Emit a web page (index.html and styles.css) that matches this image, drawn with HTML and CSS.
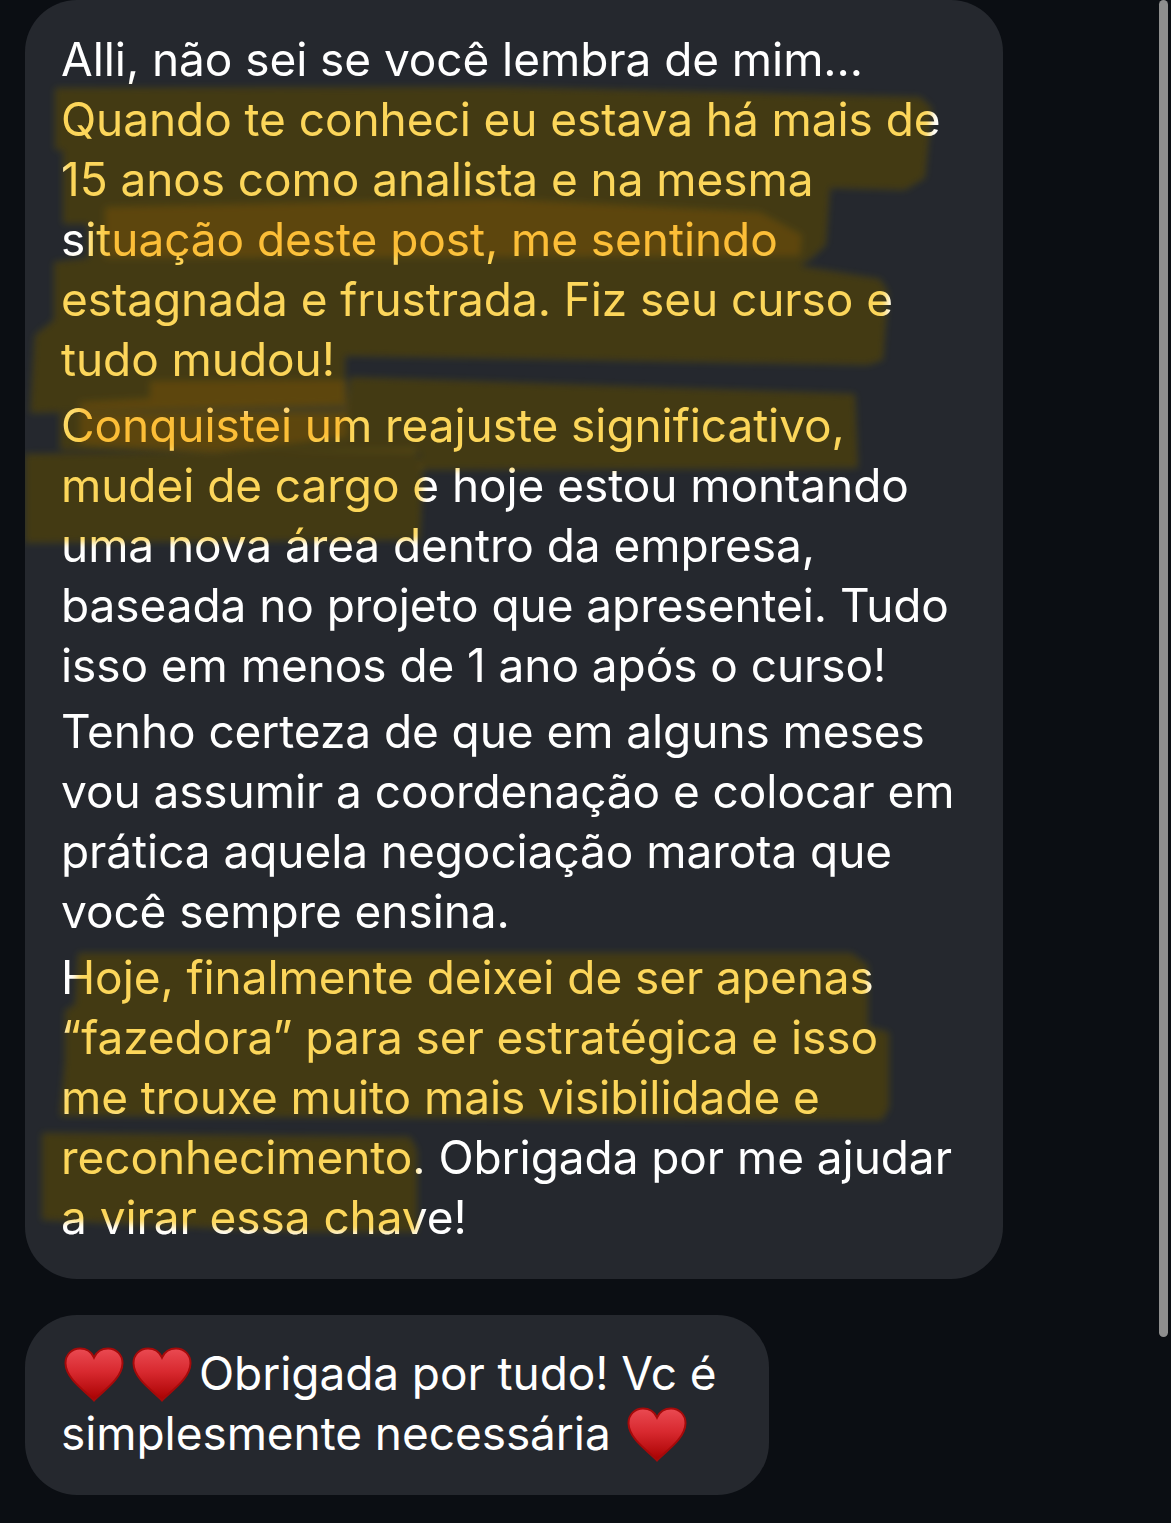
FILE: index.html
```html
<!DOCTYPE html>
<html lang="pt-BR">

<head>
    <meta charset="UTF-8" />
    <meta name="viewport" content="width=device-width, initial-scale=1" />
    <title>Mensagens</title>
    <link rel="stylesheet" href="styles.css">
</head>

<body>

    <svg class="defs" width="0" height="0" aria-hidden="true">
        <defs>
            <linearGradient id="heartFill" x1="0" y1="0" x2="0" y2="1">
                <stop offset="0" stop-color="#ea4a52" />
                <stop offset="0.45" stop-color="#d8292f" />
                <stop offset="1" stop-color="#a80000" />
            </linearGradient>
            <symbol id="heart" viewBox="0 0 60 55">
                <path d="M30 53.5C24 46 2 33 1.5 16.5 1.300 7.500 8 1.500 16 1.500c6.500 0 11.500 3.500 14 9 2.500-5.500 7.500-9 14-9 8 0 14.700 6 14.500 15C58 33 36 46 30 53.500Z"
                    fill="url(#heartFill)" stroke="#a50a0a" stroke-width="2" />
            </symbol>
            <!-- marcador: cada faixa -->
            <g id="strokesBase">
                <path d="M55 88 500 87 920 97 932 108 925 178 905 190 830 188 826 245 812 258 800 266 880 279 888 292 883 360 868 365 345 356 345 405 30 413 35 335 54 320 54 262 88 258 88 224 63 224 63 150 55 150Z" />
                <path d="M345 413 350 377 855 394 858 468 420 470 420 452 60 450 60 413Z" />
                <path d="M25 454 416 449 423 470 420 540 25 543Z" />
                <path d="M78 953 851 953 868 965 868 1027 889 1032 889 1108 882 1120 60 1116 65 1060 65 1010 75 1005Z" />
                <path d="M42 1133 410 1137 417 1150 417 1232 300 1232 42 1220Z" />
            </g>
            <g id="strokesOverlap">
                <path d="M105 207 500 199 760 212 802 235 800 256 105 258Z" />
                <path d="M150 381 347 380 347 437 213 453 80 445 80 402 150 398Z" />
            </g>
        </defs>
    </svg>

    <div class="chat">
        <span class="scrollbar"></span>

        <div class="bubble">
            <svg class="marks marks-under" viewBox="0 0 978 1279" aria-hidden="true">
                <g transform="translate(-25 0)">
                    <use href="#strokesBase" />
                    <use href="#strokesOverlap" />
                </g>
            </svg>

            <p>Alli, não sei se você lembra de mim...<br>
                Quando te conheci eu estava há mais de<br>
                15 anos como analista e na mesma<br>
                situação deste post, me sentindo<br>
                estagnada e frustrada. Fiz seu curso e<br>
                tudo mudou!</p>
            <p>Conquistei um reajuste significativo,<br>
                mudei de cargo e hoje estou montando<br>
                uma nova área dentro da empresa,<br>
                baseada no projeto que apresentei. Tudo<br>
                isso em menos de 1 ano após o curso!</p>
            <p>Tenho certeza de que em alguns meses<br>
                vou assumir a coordenação e colocar em<br>
                prática aquela negociação marota que<br>
                você sempre ensina.</p>
            <p>Hoje, finalmente deixei de ser apenas<br>
                “fazedora” para ser estratégica e isso<br>
                me trouxe muito mais visibilidade e<br>
                reconhecimento. Obrigada por me ajudar<br>
                a virar essa chave!</p>

            <svg class="marks marks-over" viewBox="0 0 978 1279" aria-hidden="true">
                <use href="#strokesBase" transform="translate(-25 0)" />
            </svg>
            <svg class="marks marks-over marks-over-2" viewBox="0 0 978 1279" aria-hidden="true">
                <use href="#strokesOverlap" transform="translate(-25 0)" />
            </svg>
        </div>

        <div class="bubble bubble-short">
            <p><svg class="heart heart-first"><use href="#heart" /></svg><svg class="heart heart-second"><use href="#heart" /></svg>Obrigada por tudo! Vc é<br>
                simplesmente necessária <svg class="heart heart-last"><use href="#heart" /></svg></p>
        </div>
    </div>

</body>

</html>
```

FILE: styles.css
```css
body {
    margin: 0;
    background-color: #0b0e13;
    font-family: Inter, "Liberation Sans", sans-serif;
    color: #ffffff;
}

.defs {
    position: absolute;
}

.chat {
    position: relative;
    height: 1523px;
    box-sizing: border-box;
    padding-left: 25px;
    overflow: hidden;
    display: flex;
    flex-direction: column;
    align-items: flex-start;
    gap: 36px;
}

.scrollbar {
    position: absolute;
    top: 0;
    right: 3px;
    width: 9px;
    height: 1337px;
    border-radius: 5px;
    background-color: #8e8e8e;
}

.bubble {
    position: relative;
    isolation: isolate;
    overflow: hidden;
    width: 978px;
    box-sizing: border-box;
    padding: 29px 36px 32px 36px;
    border-radius: 52px;
    background-color: #25282e;
    display: flex;
    flex-direction: column;
    gap: 6px;
}

.bubble-short {
    width: 744px;
    padding: 28px 36px 32px 36px;
}

.bubble p {
    position: relative;
    z-index: 1;
    margin: 0;
    font-size: 46px;
    line-height: 60px;
    font-weight: 380;
    letter-spacing: -0.07px;
    white-space: nowrap;
}

/* marcador amarelo */
.marks {
    position: absolute;
    top: 0;
    left: 0;
    width: 978px;
    height: 1279px;
    filter: blur(3.5px);
}

.marks-under {
    z-index: 0;
    fill: rgba(248, 233, 89, 0.15);
}

.marks-over {
    z-index: 2;
    fill: #fcd65a;
    mix-blend-mode: multiply;
}

.marks-over-2 {
    fill: #ffe39a;
}

.heart {
    width: 60px;
    height: 55px;
    vertical-align: -12px;
}

.heart-first {
    margin-left: 3px;
    margin-right: 8px;
}

.heart-second {
    margin-right: 7px;
}

.heart-last {
    margin-left: 3px;
}
```
